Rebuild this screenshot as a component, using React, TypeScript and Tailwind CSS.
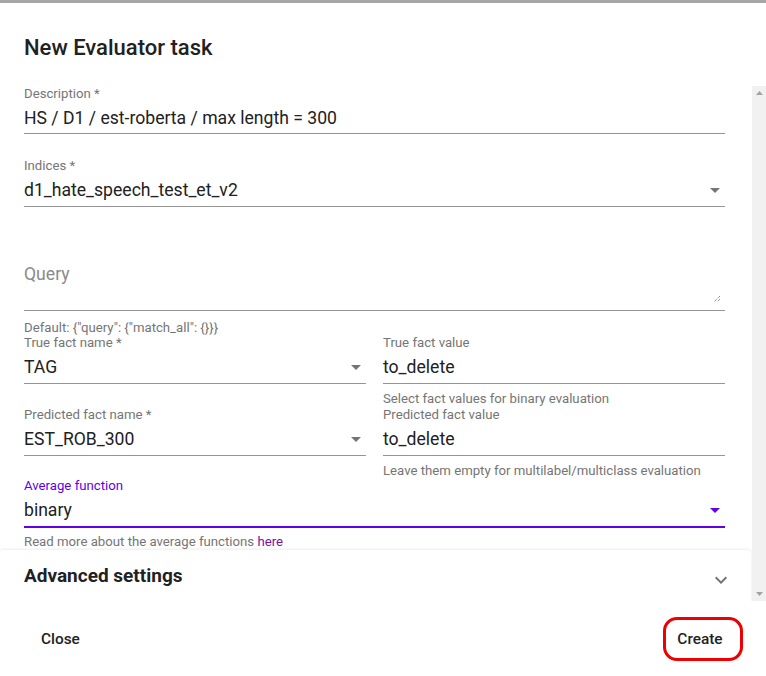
import React from "react";

const font = { fontFamily: "Roboto, 'Noto Sans', sans-serif" };

function DropArrow({ purple = false }: { purple?: boolean }) {
  return (
    <svg width="10" height="5" viewBox="0 0 10 5" className="shrink-0">
      <path d="M0 0h10L5 5z" fill={purple ? "#6200ea" : "#757575"} />
    </svg>
  );
}

function Field({
  label,
  value,
  select = false,
  h = "h-[32px]",
}: {
  label: string;
  value: string;
  select?: boolean;
  h?: string;
}) {
  return (
    <div>
      <div className="text-[13.2px] leading-[14px] pt-[1px] text-[#757575]">{label}</div>
      <div
        className={`mt-[1px] ${h} flex items-center justify-between border-b border-[#949494] pt-[1px] text-[17.6px] leading-[19px] text-[#212121]`}
      >
        <span>{value}</span>
        {select && (
          <span className="pr-[5px]">
            <DropArrow />
          </span>
        )}
      </div>
    </div>
  );
}

function Helper({ children, className = "" }: { children: React.ReactNode; className?: string }) {
  return <div className={`text-[13.2px] leading-[14px] text-[#757575] ${className}`}>{children}</div>;
}

export default function App() {
  return (
    <div style={font} className="w-[766px] h-[676px] bg-white overflow-hidden flex flex-col">
      {/* backdrop strip */}
      <div className="h-[3px] bg-[#a6a6a6] shrink-0" />

      {/* header */}
      <div className="h-[83px] shrink-0 px-[24px] pt-[29px]">
        <h2 className="text-[22px] leading-[32px] font-medium text-[#212121]">New Evaluator task</h2>
      </div>

      {/* scrollable content */}
      <div className="h-[515px] shrink-0 flex overflow-hidden">
        <div className="flex-1 pl-[24px] pr-[27px]">
          <Field label="Description *" value="HS / D1 / est-roberta / max length = 300" />

          <div className="mt-[24px]">
            <Field label="Indices *" value="d1_hate_speech_test_et_v2" select h="h-[33px]" />
          </div>

          {/* query textarea */}
          <div className="mt-[24px] h-[80px] border-b border-[#949494] pt-[34px] relative">
            <div className="text-[17.6px] leading-[19px] text-[#8a8a8a]">Query</div>
            <svg width="8" height="8" viewBox="0 0 8 8" className="absolute right-[4px] bottom-[7px]">
              <path d="M7 1L1 7M7 4L4 7" stroke="#666" strokeWidth="1" strokeDasharray="1 1" />
            </svg>
          </div>
          <Helper className="mt-[9px] pt-[1px]">Default: {'{"query": {"match_all": {}}}'}</Helper>

          <div className="grid grid-cols-2 gap-x-[17px]">
            <Field label="True fact name *" value="TAG" select h="h-[33px]" />
            <div>
              <Field label="True fact value" value="to_delete" h="h-[33px]" />
              <Helper className="mt-[7px] pt-[1px]">Select fact values for binary evaluation</Helper>
            </div>
          </div>

          <div className="mt-[1px] grid grid-cols-2 gap-x-[17px]">
            <Field label="Predicted fact name *" value="EST_ROB_300" select h="h-[33px]" />
            <div>
              <Field label="Predicted fact value" value="to_delete" h="h-[33px]" />
              <Helper className="mt-[7px] pt-[1px]">Leave them empty for multilabel/multiclass evaluation</Helper>
            </div>
          </div>

          {/* focused select */}
          <div>
            <div className="text-[13.2px] leading-[14px] pt-[1px] text-[#6200ea]">Average function</div>
            <div className="mt-[1px] h-[34px] flex items-center justify-between border-b-2 border-[#6200ea] pt-[1px] text-[17.6px] leading-[19px] text-[#212121]">
              <span>binary</span>
              <span className="pr-[5px]">
                <DropArrow purple />
              </span>
            </div>
          </div>
          <Helper className="mt-[6px] pt-[1px]">
            Read more about the average functions <span className="text-[#7a0fa3]">here</span>
          </Helper>

          {/* accordion */}
          <div className="mt-[1px] -ml-[24px] -mr-[26px] h-[60px] rounded-[4px] bg-white shadow-[0_-1px_3px_rgba(0,0,0,0.08),0_1px_1px_rgba(0,0,0,0.06)] flex items-start justify-between pl-[24px] pr-[24px] pt-[15px]">
            <span className="text-[19px] leading-[22px] font-bold text-[#212121]">Advanced settings</span>
            <svg width="12" height="8" viewBox="0 0 12 8" className="mt-[11px]">
              <path d="M1.4 0.6L6 5.2l4.6-4.6L12 2 6 8 0 2z" fill="#757575" />
            </svg>
          </div>
        </div>

        {/* scrollbar */}
        <div className="w-[14px] bg-[#f1f1f1] flex flex-col items-center justify-between py-[5px]">
          <svg width="7" height="4" viewBox="0 0 7 4">
            <path d="M0 4h7L3.5 0z" fill="#a3a3a3" />
          </svg>
          <svg width="7" height="4" viewBox="0 0 7 4">
            <path d="M0 0h7L3.5 4z" fill="#a3a3a3" />
          </svg>
        </div>
      </div>

      {/* footer actions */}
      <div className="flex-1 flex items-center justify-between pl-[33px] pr-[23px] pt-[1px]">
        <button className="h-[36px] px-[8px] pt-[1px] rounded text-[15.4px] font-medium text-[#212121]">Close</button>
        <button className="h-[44px] w-[80px] pr-[6px] pt-[1px] rounded-[14px] border-[3px] border-[#ee0000] text-[15.4px] font-medium text-[#212121]">
          Create
        </button>
      </div>
    </div>
  );
}
